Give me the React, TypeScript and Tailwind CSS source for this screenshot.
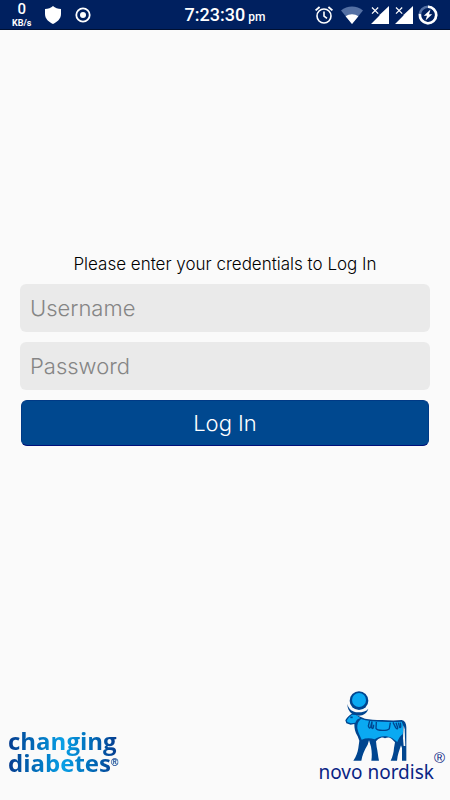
const AlarmIcon = () => (
  <svg className="h-5 w-5" viewBox="0 0 20 20" fill="none" stroke="#fff" strokeWidth="1.6">
    <circle cx="10" cy="11" r="7" />
    <path d="M10 6.5V11l3 2.4" />
    <path d="M1.6 5.4 5.6 2M18.4 5.4 14.4 2" strokeWidth="1.9" />
  </svg>
);

const WifiIcon = () => (
  <svg className="h-5 w-[22px]" viewBox="0 0 22 20">
    <path d="M11 19 0 5.6C6 .2 16 .2 22 5.6Z" fill="#5470a4" />
    <path d="M11 19 4.6 11.3C8 8.4 14 8.4 17.4 11.3Z" fill="#fff" />
  </svg>
);

const SignalIcon = () => (
  <svg className="h-5 w-5" viewBox="0 0 20 20">
    <path d="M19 1v18H1L9.5 10.5V9.5H10Z" fill="#fff" />
    <path d="M2 2.5 8.2 8.7M8.2 2.5 2 8.7" stroke="#fff" strokeWidth="1.2" />
  </svg>
);

const BatteryIcon = () => (
  <svg className="h-5 w-5" viewBox="0 0 20 20" fill="none">
    <circle cx="10" cy="10" r="8.2" stroke="#5470a4" strokeWidth="2.6" />
    <path d="M10 1.8A8.2 8.2 0 1 1 1.9 9" stroke="#fff" strokeWidth="2.6" />
    <path d="M12.5 4.5 5.8 10.8H9L7.5 15.5 14.2 9.2H11Z" fill="#fff" />
  </svg>
);

const BullLogo = () => (
  <svg className="h-[75px] w-20" viewBox="0 0 240 225" role="img" aria-label="Novo Nordisk bull">
    <circle cx="69" cy="38" r="28" fill="#00458f" />
    <circle cx="69" cy="36" r="21" fill="#0aa9f2" />
    <path d="M34 48C38 64 50 73 66 73 80 73 91 70 97 62 93 75 84 82 68 83L53 80C42 75 34 63 34 48Z" fill="#00458f" />
    <path
      d="M47 77C40 81 33 88 28 97L31 106 44 110 55 108C55 121 57 133 65 145L70 158 67 180C65 193 61 205 52 218H76C79 202 84 188 95 170L99 157 105 176C108 193 108 205 106 218H129C126 204 125 190 122 177L120 160 126 154C135 148 141 147 147 151 155 147 162 148 168 154L177 163 174 180C173 194 170 206 164 218H183C185 200 190 187 195 172L198 180V218H211V118C211 105 206 98 197 96 177 98 158 97 138 96 117 96 101 94 87 92L66 83 55 77Z"
      fill="#00458f"
    />
    <path d="M48 80C42 84 36 90 32 98L35 103 45 106 58 104C60 96 66 92 73 90L60 81Z" fill="#0aa9f2" />
    <path
      d="M75 93C66 100 63 109 64 121 66 134 72 144 77 155 89 150 102 149 116 154 131 143 151 142 168 150L184 162C190 148 194 143 200 139 203 123 202 110 197 101 176 103 157 102 138 101 113 101 92 99 75 93Z"
      fill="#0aa9f2"
    />
    <path d="M203 112 206 124 208 174H203L201 150Z" fill="#fafafa" />
    <path d="M43 88H50" stroke="#00458f" strokeWidth="5" />
    <path
      d="M101 98 97 114C99 120 101 122 104 117L108 100M108 101 107 119C110 125 113 119 113 110M121 102 120 121C124 129 153 129 160 122L163 104M171 103 179 119C184 126 187 122 184 116L180 104M187 104 191 118C195 120 195 116 193 104"
      fill="none"
      stroke="#00458f"
      strokeWidth="4"
    />
  </svg>
);

const StatusBar = () => (
  <header className="flex h-[30px] items-center justify-between border-b border-[#001032] bg-[#00205f] px-3 font-[Roboto,sans-serif] text-white">
    <div className="flex flex-1 items-center gap-[14px]">
      <div className="flex flex-col items-center">
        <span className="text-[15px] leading-[17px] font-medium">0</span>
        <span className="text-[9px] leading-[11px] font-bold">KB/s</span>
      </div>
      <svg className="h-[18px] w-4" viewBox="0 0 16 18">
        <path d="M8 0C10 2 13 3 16 3V8C16 13 12 16 8 18 4 16 0 13 0 8V3C3 3 6 2 8 0Z" fill="#fff" />
      </svg>
      <svg className="h-4 w-4" viewBox="0 0 16 16">
        <circle cx="8" cy="8" r="6.7" fill="none" stroke="#fff" strokeWidth="1.8" />
        <circle cx="8" cy="8" r="3" fill="#fff" />
      </svg>
    </div>
    <div className="flex items-baseline gap-[3px] font-medium">
      <span className="text-lg leading-6">7:23:30</span>
      <span className="text-xs">pm</span>
    </div>
    <div className="flex flex-1 items-center justify-end gap-[7px]">
      <AlarmIcon />
      <WifiIcon />
      <div className="flex items-center gap-1">
        <SignalIcon />
        <SignalIcon />
        <BatteryIcon />
      </div>
    </div>
  </header>
);

const inputClass =
  'h-12 w-full rounded-md bg-[#eaeaea] px-[10px] text-[22px] font-light text-[#333333] placeholder:text-[#858585] placeholder:opacity-100 outline-none';

const App = () => {
  return (
    <div className="flex min-h-screen flex-col bg-[#fafafa] font-[Inter,sans-serif]">
      <StatusBar />

      <main className="flex flex-1 flex-col justify-center px-5">
        <form onSubmit={(e) => e.preventDefault()}>
          <p className="mb-[10px] text-center text-[17px] leading-5 font-light text-black">
            Please enter your credentials to Log In
          </p>
          <div className="flex flex-col gap-[10px]">
            <input className={inputClass} type="text" placeholder="Username" aria-label="Username" />
            <input className={inputClass} type="password" placeholder="Password" aria-label="Password" />
            <div className="px-px">
              <button
                type="submit"
                className="h-[46px] w-full rounded-md border border-[#003a86] border-b-[#00107a] bg-[#00488f] text-[22px] font-light text-white"
              >
                Log In
              </button>
            </div>
          </div>
        </form>
      </main>

      <footer className="flex h-[130px] items-end justify-between pr-[5px] pb-[18px] pl-2">
        <div className="bg-linear-to-r from-[#063b8e] via-[#0aa0e6] to-[#063b8e] bg-clip-text pb-2 font-['Open_Sans',sans-serif] text-2xl leading-[22px] font-bold text-transparent">
          <div>changing</div>
          <div className="flex items-center">
            <span>diabetes</span>
            <span className="font-['Liberation_Sans',sans-serif] text-[10px] leading-3 font-normal text-[#3a63a5]">®</span>
          </div>
        </div>
        <div className="flex items-end text-[#0a2584]">
          <div className="flex flex-col items-center">
            <BullLogo />
            <span className="font-['Noto_Sans',sans-serif] text-[19px] leading-[19px]">novo nordisk</span>
          </div>
          <span className="pb-4 font-['Liberation_Sans',sans-serif] text-[15px] leading-4">®</span>
        </div>
      </footer>
    </div>
  );
};

export default App;
